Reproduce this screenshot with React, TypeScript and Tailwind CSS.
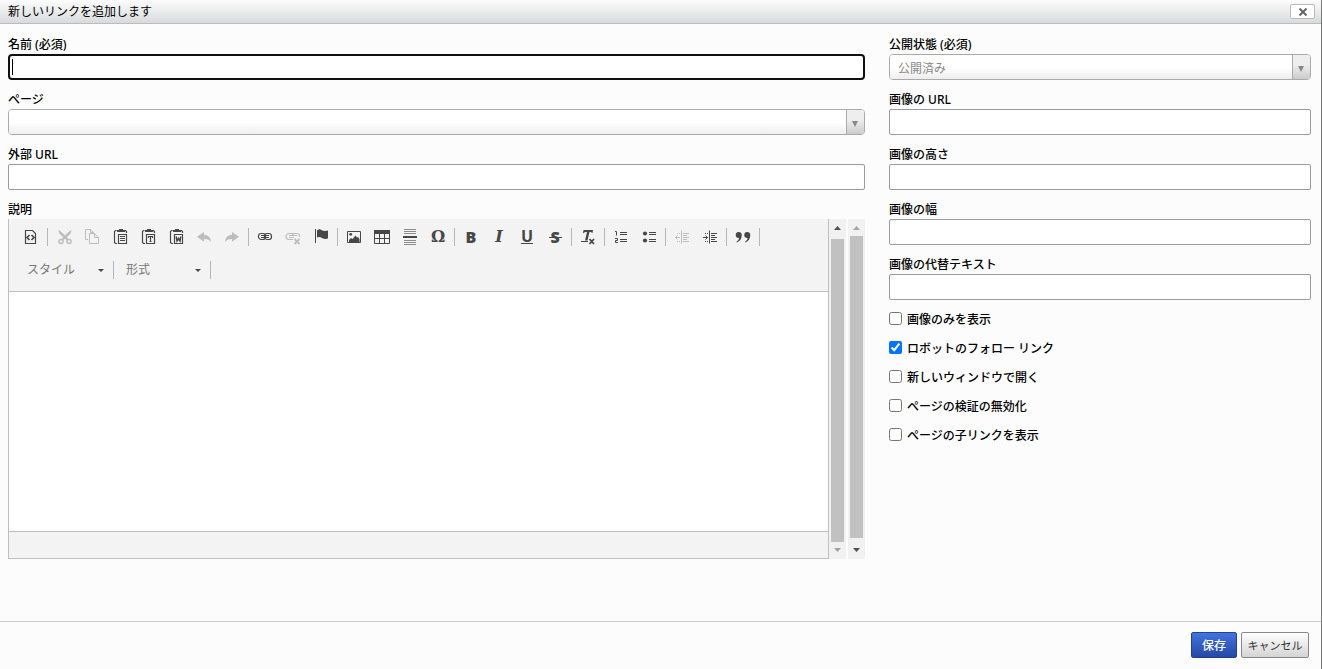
import React, { useId } from "react";

type IconProps = { children: React.ReactNode };

function Icon({ children }: IconProps) {
  return (
    <svg viewBox="0 0 16 16" className="size-4 shrink-0" fill="none" stroke="currentColor" strokeWidth="1" aria-hidden="true">
      {children}
    </svg>
  );
}

function PasteBase({ children }: IconProps) {
  return (
    <Icon>
      <path d="M4.500 1.500H3.500L2.500 2.500V13.500L3.500 14.500H5M12.500 1.500H13.500L14.500 2.500V4" strokeWidth="1.200" />
      <path d="M5 3V1H7V0H11V1H13V3Z" fill="currentColor" stroke="none" />
      <path d="M6.500 6V5.500H14.500V14.500H6.500Z" strokeWidth="1.200" />
      {children}
    </Icon>
  );
}

const icons = {
  source: (
    <Icon>
      <path d="M2.500 1.500H9.500L12.500 4.500V14.500H2.500Z" strokeWidth="1.200" />
      <path d="M6.500 6L4 8.500L6.500 11M8.500 6L11 8.500L8.500 11" strokeWidth="1.700" />
    </Icon>
  ),
  cut: (
    <Icon>
      <path d="M2.500 1Q2.500 4.500 6.500 7.500L11.500 12L13 10.500L5.500 3Z" fill="currentColor" stroke="none" />
      <path d="M15.500 1Q15.500 4.500 11.500 7.500L6.500 12L5 10.500L12.500 3Z" fill="currentColor" stroke="none" />
      <circle cx="5" cy="12.500" r="2" strokeWidth="1.600" />
      <circle cx="13" cy="12.500" r="2" strokeWidth="1.600" />
    </Icon>
  ),
  copy: (
    <Icon>
      <path d="M4 10.500H1.500V.5H6.500L9.500 3.500V4M6.500 .5V3.500H9" />
      <path d="M5.500 4.500H10.500L14.500 8.500V14.500H5.500ZM10.500 4.500V8.500H14.500" />
    </Icon>
  ),
  paste: (
    <PasteBase>
      <path d="M8 7.500H13M8 9.500H13M8 11.500H13" strokeWidth="1.200" />
    </PasteBase>
  ),
  pasteText: (
    <PasteBase>
      <path d="M8.500 9V7.500H12.500V9M10.500 7.500V12.500M9.500 12.500H11.500" strokeWidth="1.200" />
    </PasteBase>
  ),
  pasteWord: (
    <PasteBase>
      <path d="M8.200 7.500L9 12L10.500 9.500L12 12L12.800 7.500" strokeWidth="1.500" />
    </PasteBase>
  ),
  undo: (
    <Icon>
      <path d="M1 7.800L8 3V5.800C12.500 6 14.700 9 15 13C13.500 10.800 11.500 9.800 8 9.900V12.700Z" fill="currentColor" stroke="none" />
    </Icon>
  ),
  redo: (
    <Icon>
      <path d="M15 7.800L8 3V5.800C3.500 6 1.300 9 1 13C2.500 10.800 4.500 9.800 8 9.900V12.700Z" fill="currentColor" stroke="none" />
    </Icon>
  ),
  link: (
    <Icon>
      <rect x="1.500" y="4.500" width="7" height="6" rx="2.800" strokeWidth="1.200" />
      <rect x="7.500" y="4.500" width="7" height="6" rx="2.800" strokeWidth="1.200" />
      <path d="M4 6.500H12M4 8.500H12" />
    </Icon>
  ),
  unlink: (
    <Icon>
      <path d="M8.500 6V5.500Q8.500 4.500 7 4.500H4A3 3 0 0 0 4 10.500H8M7.500 6V5.500Q7.500 4.500 9 4.500H12A2.800 2.800 0 0 1 14.500 8M4 6.500H12M4 8.500H9" strokeWidth="1.200" />
      <path d="M9.500 10L14.500 15M14.500 10L9.500 15" strokeWidth="1.800" />
    </Icon>
  ),
  anchor: (
    <Icon>
      <path d="M2.500 0V14" />
      <path d="M4 1.500Q6 -.5 8.500 1T15 1.500V9.500Q11.500 10.500 9 9T4 8.500Z" fill="currentColor" stroke="none" />
    </Icon>
  ),
  image: (
    <Icon>
      <path d="M1.500 2.500H14.500V13.500H1.500Z" />
      <path d="M3 13V11L5 9L6.500 10L9.500 6.500L11 8.500L12 8L13.500 10V13Z" fill="currentColor" stroke="none" />
      <circle cx="4.700" cy="5.300" r="1.400" fill="currentColor" stroke="none" />
    </Icon>
  ),
  table: (
    <Icon>
      <path d="M0 1H16V5H0Z" fill="currentColor" stroke="none" />
      <path d="M.5 1.500H15.500V14.500H.5ZM5.500 4V14.500M10.500 4V14.500M.5 9.500H15.500" />
    </Icon>
  ),
  rule: (
    <Icon>
      <path d="M2 .5H14M2 2.500H14M2 4.500H14M2 11.500H14M2 13.500H14M2 15.500H14" opacity=".6" />
      <path d="M1 8H15" strokeWidth="2" />
    </Icon>
  ),
  removeFormat: (
    <Icon>
      <path d="M3 4L3.500 1H13L12.500 4H11.500V3H9.500L7.500 11.500H5L7 3H5L4 4Z" fill="currentColor" stroke="none" />
      <path d="M1 12.500H8" />
      <path d="M9.500 10L14 15M14 10L9.500 15" strokeWidth="1.800" />
    </Icon>
  ),
  ordered: (
    <Icon>
      <path d="M7 3.500H14M7 5.500H14M7 10.500H14M7 12.500H14" />
      <path d="M2 2.500H3.500V6.500M2 9.500H4.500V11.500H2.500V13.500H5" />
    </Icon>
  ),
  bulleted: (
    <Icon>
      <path d="M8 3.500H15M8 5.500H15M8 10.500H15M8 12.500H15" />
      <circle cx="4" cy="4.500" r="2.100" fill="currentColor" stroke="none" />
      <circle cx="4" cy="11.500" r="2.100" fill="currentColor" stroke="none" />
    </Icon>
  ),
  outdent: (
    <Icon>
      <path d="M7.500 1.500V14.500M9 4.500H15M9 6.500H13M9 8.500H15M9 10.500H13M9 12.500H15M1 8.500H6M3.500 6.500L1.500 8.500L3.500 10.500" />
      <path d="M3 4.500H6M3 12.500H6" strokeDasharray="1 1" />
    </Icon>
  ),
  indent: (
    <Icon>
      <path d="M7.500 1.500V14.500M9 4.500H15M9 6.500H13M9 8.500H15M9 10.500H13M9 12.500H15M1 8.500H6M3.500 6.500L5.500 8.500L3.500 10.500" />
      <path d="M3 4.500H6M3 12.500H6" strokeDasharray="1 1" />
    </Icon>
  ),
  quote: (
    <Icon>
      <path d="M3.500 3A3 3 0 0 1 6.800 6.200C6.800 9.500 5 12.300 1.800 13.500L1.500 12.800C3.300 11.500 4 10.300 4 9A3 3 0 1 1 3.500 3Z" fill="currentColor" stroke="none" />
      <path d="M12 3A3 3 0 0 1 15.300 6.200C15.300 9.500 13.500 12.300 10.300 13.500L10 12.800C11.800 11.500 12.500 10.300 12.500 9A3 3 0 1 1 12 3Z" fill="currentColor" stroke="none" />
    </Icon>
  ),
};

type Tool = { label: string; face: React.ReactNode; disabled?: boolean };

const groups: Tool[][] = [
  [{ label: "ソース", face: icons.source }],
  [
    { label: "切り取り", face: icons.cut, disabled: true },
    { label: "コピー", face: icons.copy, disabled: true },
    { label: "貼り付け", face: icons.paste },
    { label: "プレーンテキスト貼り付け", face: icons.pasteText },
    { label: "ワード文章から貼り付け", face: icons.pasteWord },
    { label: "元に戻す", face: icons.undo, disabled: true },
    { label: "やり直す", face: icons.redo, disabled: true },
  ],
  [
    { label: "リンク挿入", face: icons.link },
    { label: "リンクを削除", face: icons.unlink, disabled: true },
    { label: "アンカー挿入", face: icons.anchor },
  ],
  [
    { label: "イメージ", face: icons.image },
    { label: "表", face: icons.table },
    { label: "水平線", face: icons.rule },
    { label: "特殊文字挿入", face: <span className="font-['DejaVu_Serif',serif] text-base leading-4 font-bold">Ω</span> },
  ],
  [
    { label: "太字", face: <span className="font-['Open_Sans',sans-serif] text-base leading-4 font-extrabold">B</span> },
    { label: "斜体", face: <span className="font-['DejaVu_Serif',serif] text-base leading-4 font-bold italic">I</span> },
    { label: "下線", face: <span className="border-b border-current font-['Open_Sans',sans-serif] text-base leading-[13px] font-bold">U</span> },
    {
      label: "打ち消し線",
      face: (
        <span className="grid place-items-center font-['Open_Sans',sans-serif] text-base leading-4 font-extrabold">
          <span className="col-start-1 row-start-1">S</span>
          <span className="col-start-1 row-start-1 h-px w-[13px] bg-current" />
        </span>
      ),
    },
  ],
  [{ label: "書式を解除", face: icons.removeFormat }],
  [
    { label: "番号付きリスト", face: icons.ordered },
    { label: "番号無しリスト", face: icons.bulleted },
  ],
  [
    { label: "インデント解除", face: icons.outdent, disabled: true },
    { label: "インデント", face: icons.indent },
  ],
  [{ label: "ブロック引用文", face: icons.quote }],
];

function Separator() {
  return <span className="mx-0.5 h-[18px] w-px shrink-0 bg-[#b6b6b6]" />;
}

function ToolCombo({ text, className }: { text: string; className: string }) {
  return (
    <div className={`relative h-7 ${className}`}>
      <select aria-label={text} className="h-full w-full appearance-none pl-2.5 text-xs text-[#777] outline-none">
        <option>{text}</option>
      </select>
      <svg viewBox="0 0 6 3" className="pointer-events-none absolute top-[13px] right-[7px] h-[3px] w-1.5 fill-[#474747]" aria-hidden="true">
        <path d="M0 0H6L3 3Z" />
      </svg>
    </div>
  );
}

function ScrollRail({ dim, thumb }: { dim: "up" | "down"; thumb: string }) {
  const dark = "fill-[#505050]";
  const light = "fill-[#a3a3a3]";
  return (
    <div className="flex w-[17px] shrink-0 flex-col items-center bg-[#f1f1f1]" aria-hidden="true">
      <svg viewBox="0 0 17 17" className={`size-[17px] shrink-0 ${dim === "up" ? light : dark}`}>
        <path d="M5 11L8.500 7L12 11Z" />
      </svg>
      <div className={`w-[13px] flex-1 bg-[#c1c1c1] ${thumb}`} />
      <svg viewBox="0 0 17 17" className={`size-[17px] shrink-0 ${dim === "down" ? light : dark}`}>
        <path d="M5 6L8.500 10L12 6Z" />
      </svg>
    </div>
  );
}

function Editor() {
  return (
    <div className="flex">
      <div className="min-w-0 flex-1 border-r border-b border-l border-[#bfbfbf] bg-white">
        <div className="flex flex-col gap-[5px] border-b border-[#bfbfbf] bg-[#f3f3f3] pt-1 pb-[7px] pl-2">
          <div className="flex h-7 items-center">
            {groups.map((group, i) => (
              <div key={i} className="flex items-center">
                {group.map((tool) => (
                  <button
                    key={tool.label}
                    type="button"
                    aria-label={tool.label}
                    disabled={tool.disabled}
                    className="flex h-7 w-7 items-center justify-center text-[#474747] disabled:text-[#bdbdbd]"
                  >
                    {tool.face}
                  </button>
                ))}
                <Separator />
              </div>
            ))}
          </div>
          <div className="flex h-7 items-center">
            <ToolCombo text="スタイル" className="w-[94px]" />
            <Separator />
            <ToolCombo text="形式" className="w-[92px]" />
            <Separator />
          </div>
        </div>
        <div role="textbox" aria-multiline="true" aria-label="説明" contentEditable suppressContentEditableWarning className="h-[239px] outline-none" />
        <div className="h-[27px] border-t border-[#bfbfbf] bg-[#f3f3f3]" />
      </div>
      <ScrollRail dim="down" thumb="mt-[3px]" />
      <div className="w-0.5 shrink-0" />
      <ScrollRail dim="up" thumb="mb-1" />
    </div>
  );
}

const labelClass = "block pb-0.5 text-xs leading-[14px] font-medium text-black";

function TextField({ label, focused }: { label: string; focused?: boolean }) {
  const id = useId();
  return (
    <div className="relative">
      <label htmlFor={id} className={labelClass}>{label}</label>
      <input
        id={id}
        type="text"
        className={
          focused
            ? "block h-[26px] w-full rounded border-2 border-[#101010] bg-white px-1 text-xs caret-transparent outline-none"
            : "block h-[26px] w-full rounded-xs border border-[#9b9b9b] bg-white px-1 text-xs outline-none"
        }
      />
      {focused && <span className="absolute bottom-[5px] left-1 h-4 w-px bg-black" />}
    </div>
  );
}

function SelectField({ label, value }: { label: string; value: string }) {
  const id = useId();
  return (
    <div>
      <label htmlFor={id} className={labelClass}>{label}</label>
      <div className="relative h-[26px] overflow-hidden rounded border border-[#aaa]">
        <select id={id} className="h-full w-full appearance-none bg-linear-to-b from-white from-50% to-[#eee] px-2 pt-1 text-xs text-[#888] outline-none">
          <option>{value}</option>
        </select>
        <span className="pointer-events-none absolute inset-y-0 right-0 flex w-[18px] items-center justify-center border-l border-[#aaa] bg-linear-to-b from-[#eee] from-40% to-[#ccc] pr-px">
          <svg viewBox="0 0 6 6" className="mt-1 size-1.5 fill-[#888]" aria-hidden="true">
            <path d="M0 0H6L3 6Z" />
          </svg>
        </span>
      </div>
    </div>
  );
}

function CheckField({ label, checked }: { label: string; checked?: boolean }) {
  return (
    <label className="flex h-4 items-start gap-[5px] text-xs leading-[18px] font-medium text-black">
      <input type="checkbox" defaultChecked={checked} className="mt-px size-[13px]" />
      {label}
    </label>
  );
}

export default function App() {
  return (
    <div className="flex min-h-screen flex-col border-r border-[#777] bg-[#fcfcfc] font-['Noto_Sans','Noto_Sans_CJK_JP',sans-serif] text-xs text-black">
      <header className="flex h-6 items-center justify-between border-b border-[#bcbcbc] bg-linear-to-b from-[#fcfcfc] to-[#d9dadb] pr-1.5 pl-2">
        <h1 className="text-xs leading-4 font-normal">新しいリンクを追加します</h1>
        <button type="button" aria-label="閉じる" className="flex h-[15px] w-[25px] items-center justify-center rounded-xs border border-[#bbb] bg-white">
          <svg viewBox="0 0 8 8" className="size-2 stroke-[#666]" strokeWidth="2" aria-hidden="true">
            <path d="M.5 .5L7.500 7.500M7.500 .5L.5 7.500" />
          </svg>
        </button>
      </header>

      <main className="grid flex-1 grid-cols-[minmax(0,857fr)_minmax(0,422fr)] items-start gap-x-6 pt-3.5 pr-2.5 pb-4 pl-2">
        <div className="flex flex-col gap-[13px]">
          <TextField label="名前 (必須)" focused />
          <SelectField label="ページ" value="" />
          <TextField label="外部 URL" />
          <div>
            <span className={labelClass}>説明</span>
            <Editor />
          </div>
        </div>
        <div className="flex flex-col gap-[13px]">
          <SelectField label="公開状態 (必須)" value="公開済み" />
          <TextField label="画像の URL" />
          <TextField label="画像の高さ" />
          <TextField label="画像の幅" />
          <TextField label="画像の代替テキスト" />
          <div className="-mt-0.5 flex flex-col gap-[13px]">
            <CheckField label="画像のみを表示" />
            <CheckField label="ロボットのフォロー リンク" checked />
            <CheckField label="新しいウィンドウで開く" />
            <CheckField label="ページの検証の無効化" />
            <CheckField label="ページの子リンクを表示" />
          </div>
        </div>
      </main>

      <footer className="flex justify-end gap-1 border-t border-[#ccc] pt-2.5 pr-3 pb-[11px]">
        <button type="button" className="h-[26px] rounded-xs border border-[#25408f] bg-linear-to-b from-[#4273df] to-[#2549a5] px-2.5 pt-0.5 text-xs font-medium text-white">保存</button>
        <button type="button" className="h-[26px] w-[68px] rounded-xs border border-[#888] bg-linear-to-b from-white to-[#d4d4d4] pt-0.5 text-[11px] text-[#333]">キャンセル</button>
      </footer>
    </div>
  );
}
